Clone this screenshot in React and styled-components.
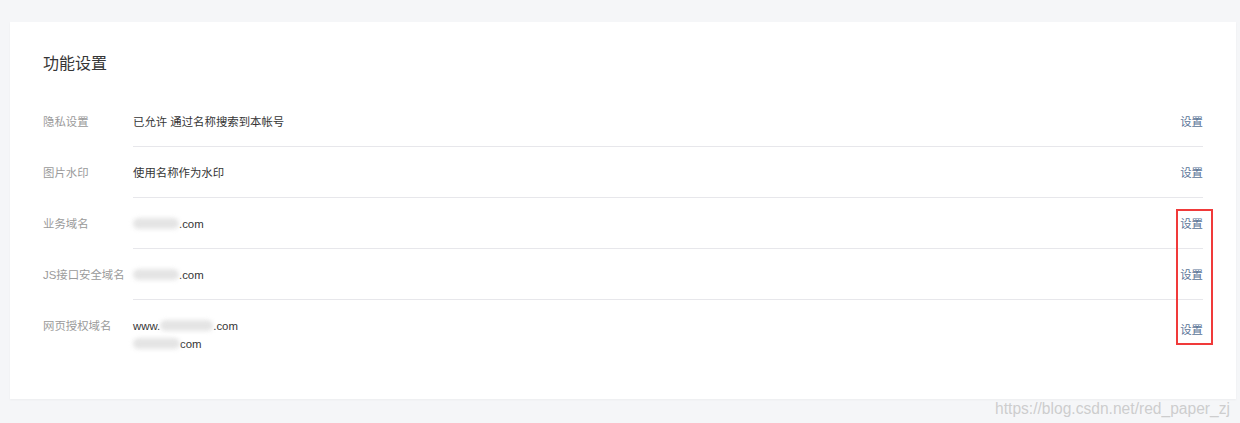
import React from "react";
import styled, { createGlobalStyle } from "styled-components";

const GlobalStyle = createGlobalStyle`
  html, body {
    margin: 0;
    padding: 0;
    background: #f5f6f8;
    font-family: "Liberation Sans", "Noto Sans CJK SC", sans-serif;
  }
`;

const Page = styled.div`
  position: relative;
  width: 1240px;
  height: 423px;
  padding: 22px 4px 0 10px;
  box-sizing: border-box;
  background: #f5f6f8;
`;

const Card = styled.div`
  background: #fff;
  box-shadow: 0 1px 2px rgba(0, 0, 0, 0.04);
  padding: 30px 33px 31px 33px;
`;

const Title = styled.h2`
  margin: 0 0 20px 0;
  font-size: 16px;
  line-height: 24px;
  font-weight: normal;
  color: #353535;
`;

const Row = styled.div`
  display: flex;
`;

const Label = styled.div`
  width: 90px;
  flex-shrink: 0;
  padding-top: 16.5px;
  font-size: 11.4px;
  line-height: 18px;
  color: #9a9a9a;
  white-space: nowrap;
`;

const Body = styled.div`
  flex: 1;
  display: flex;
  align-items: flex-start;
  justify-content: space-between;
  padding: 16.5px 0 15.5px;
  border-bottom: ${(p) => (p.$last ? "none" : "1px solid #e7e7eb")};
`;

const Value = styled.div`
  font-size: 11.4px;
  line-height: 18px;
  color: #353535;
`;

const Line = styled.div`
  display: flex;
  align-items: center;
`;

const Blur = styled.span`
  display: inline-block;
  width: ${(p) => p.$w}px;
  height: 11px;
  background: #dcdcdc;
  border-radius: 6px;
  filter: blur(2px);
  opacity: 0.75;
`;

const Action = styled.a`
  font-size: 11.4px;
  line-height: 18px;
  color: #5b7497;
  text-decoration: none;
  cursor: pointer;
  margin-top: ${(p) => (p.$offset ? "4px" : "0")};
`;

const Highlight = styled.div`
  position: absolute;
  left: 1176px;
  top: 209px;
  width: 33px;
  height: 132px;
  border: 2px solid #f03a3a;
`;

const Watermark = styled.div`
  position: absolute;
  right: 10px;
  top: 399px;
  font-size: 15.6px;
  line-height: 20px;
  color: rgba(200, 200, 200, 0.9);
  font-family: "Liberation Sans", sans-serif;
`;

const rows = [
  { label: "隐私设置", lines: [["已允许 通过名称搜索到本帐号"]] },
  { label: "图片水印", lines: [["使用名称作为水印"]] },
  { label: "业务域名", lines: [[{ blur: 46 }, ".com"]] },
  { label: "JS接口安全域名", lines: [[{ blur: 46 }, ".com"]] },
  {
    label: "网页授权域名",
    lines: [
      ["www.", { blur: 53 }, ".com"],
      [{ blur: 47 }, "com"],
    ],
  },
];

export default function App() {
  return (
    <>
      <GlobalStyle />
      <Page>
        <Card>
          <Title>功能设置</Title>
          {rows.map((r, i) => (
            <Row key={r.label}>
              <Label>{r.label}</Label>
              <Body $last={i === rows.length - 1}>
                <Value>
                  {r.lines.map((parts, j) => (
                    <Line key={j}>
                      {parts.map((p, k) =>
                        typeof p === "string" ? (
                          <span key={k}>{p}</span>
                        ) : (
                          <Blur key={k} $w={p.blur} />
                        )
                      )}
                    </Line>
                  ))}
                </Value>
                <Action $offset={r.lines.length > 1}>设置</Action>
              </Body>
            </Row>
          ))}
        </Card>
        <Highlight />
        <Watermark>https://blog.csdn.net/red_paper_zj</Watermark>
      </Page>
    </>
  );
}
